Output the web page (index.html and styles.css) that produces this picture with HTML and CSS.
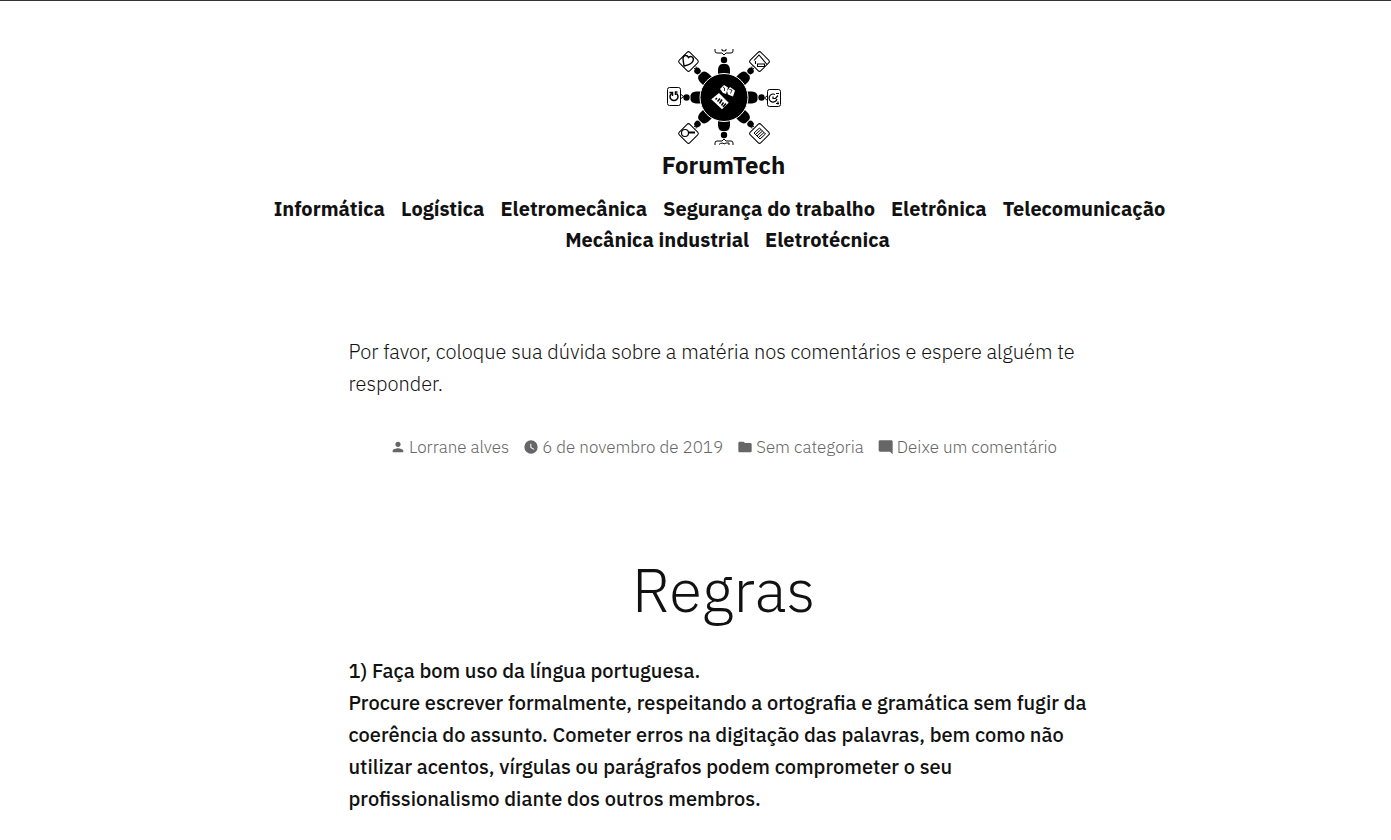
FILE: index.html
```html
<!DOCTYPE html>
<html lang="pt-BR">
<head>
<meta charset="utf-8">
<title>ForumTech</title>
<link rel="stylesheet" href="styles.css">
</head>
<body>
<div class="page">
<header class="site-header">
<a class="logo" href="#" aria-label="ForumTech">
<svg width="116" height="96" viewBox="0 0 116 96" fill="none" stroke="#000" stroke-width="1">
<defs>
<g id="person" fill="#000" stroke="none"><circle cx="0" cy="-37.500" r="3.200"/><path d="M-6-20V-28Q-5.500-33-2-33.500H2Q5.500-33 6-28V-20Z"/></g>
</defs>
<use href="#person" transform="translate(58 48.500)"/>
<use href="#person" transform="translate(58 48.500) rotate(45)"/>
<use href="#person" transform="translate(58 48.500) rotate(90)"/>
<use href="#person" transform="translate(58 48.500) rotate(135)"/>
<use href="#person" transform="translate(58 48.500) rotate(180)"/>
<use href="#person" transform="translate(58 48.500) rotate(225)"/>
<use href="#person" transform="translate(58 48.500) rotate(270)"/>
<use href="#person" transform="translate(58 48.500) rotate(315)"/>
<circle cx="58" cy="48.500" r="24" fill="#000" stroke="#fff"/>
<g fill="#fff" stroke="none"><path d="M53 44l9.700 9.700-6.700 6.600-10.700-10zM54 40l4-4 4 2.500-2 6.500-3-1zM61 42l3-4 5 3.500-2 6-5-2z"/></g>
<path d="M57 38l1.500 1v3M63.500 40.500l2.500.5-1.500 3.500" stroke-width=".8"/>
<path d="M49.500 50.500l1.500-1.500M51.500 52.500l2.500-3M53.500 54.500l2.500-4M55.500 56.500l2-3M57 58l3-3.500" stroke-width="1.500"/>
<path d="M30 17.500l.5 2.500-2.500-.5M86 17.500l-.5 2.500 2.500-.5M14.500 45l3 2.500-3 2.500M101.500 46.500l-3 2.500 3 2.500M30 79.500l.5-2.500-2.500.5M86 79.500l-.5-2.500 2.500.5"/>
<rect x="15" y="5" width="15" height="15" rx="2" transform="rotate(45 22.500 12.500)"/>
<path d="M18 17Q17 10 17 9.500C17 6 21 5.500 22.500 8.500C25 6 28.500 8.500 27 12Q25.500 15.500 18 17z" stroke-width="1.400"/>
<rect x="86" y="5" width="15" height="15" rx="2" transform="rotate(45 93.500 12.500)"/>
<path d="M88 11.500l5-5.500 8 9.500M89.500 12v3M91.500 15h7v2.500h-7z" stroke-width="1.100"/>
<rect x="1.500" y="38.500" width="13" height="18" rx="2"/><path d="M5.500 44.500a4 4 0 1 0 5 0M3.500 43.500h3v3.500M11.500 43h-2v3" stroke-width="1.500"/>
<rect x="101.500" y="40.500" width="13" height="17" rx="2"/><path d="M109 45.500a4 4 0 1 0 2 4.500M107 47.500v2h2.500l2.500-3M110 44.500h3M110 54.500h3M112 52.500v3" stroke-width="1.200"/>
<rect x="15" y="77" width="15" height="15" rx="2" transform="rotate(45 22.500 84.500)"/><circle cx="19" cy="84" r="3.500" stroke-width="1.200"/><path d="M22.500 83.500h6.500" stroke-width="2"/>
<rect x="86" y="77" width="15" height="15" rx="2" transform="rotate(45 93.500 84.500)"/><path d="M88 84l5.500-5 6 6-5.500 5zM89.500 85.500l5.500-5M91 87l5.500-5M92.500 88.500l5.500-5" stroke-width="1"/>
<path d="M49 0v2q0 2 2 2h5l2 2 2-2h5q2 0 2-2V0M56 0v1.500q2 1 4 0V0M49 96v-2q0-2 2-2h5l2-2 2 2h5q2 0 2 2v2M53 95.500q1-1.500 4-1.500l1 1 2-1h3v2"/>
</svg>
</a>
<p class="site-title"><a href="#">ForumTech</a></p>
<nav class="main-nav" aria-label="Menu principal">
<ul>
<li><a href="#">Informática</a></li><li><a href="#">Logística</a></li><li><a href="#">Eletromecânica</a></li><li><a href="#">Segurança do trabalho</a></li><li><a href="#">Eletrônica</a></li><li><a href="#">Telecomunicação</a></li><li><a href="#">Mecânica industrial</a></li><li><a href="#">Eletrotécnica</a></li>
</ul>
</nav>
</header>
<main>
<article class="entry">
<p class="intro">Por favor, coloque sua dúvida sobre a matéria nos comentários e espere alguém te responder.</p>
<footer class="meta">
<a href="#"><svg class="icon" viewBox="0 0 24 24"><path d="M12 12c2.210 0 4-1.790 4-4s-1.790-4-4-4-4 1.790-4 4 1.790 4 4 4zm0 2c-2.670 0-8 1.340-8 4v2h16v-2c0-2.660-5.330-4-8-4z"/></svg>Lorrane alves</a>
<a href="#"><svg class="icon" viewBox="0 0 24 24"><path d="M12 2a10 10 0 1 0 0 20 10 10 0 0 0 0-20zm4.200 14.200L11 13V7h1.500v5.200l4.500 2.700z"/></svg>6 de novembro de 2019</a>
<a href="#"><svg class="icon" viewBox="0 0 24 24"><path d="M10 4H4c-1.100 0-2 .9-2 2v12c0 1.100.9 2 2 2h16c1.100 0 2-.9 2-2V8c0-1.100-.9-2-2-2h-8z"/></svg>Sem categoria</a>
<a href="#"><svg class="icon" viewBox="0 0 24 24"><path d="M22 4c0-1.100-.9-2-2-2H3C2 2 1 3 1 4v13c0 1 1 2 2 2h15l4 4z"/></svg>Deixe um comentário</a>
</footer>
</article>
<article class="entry">
<h1>Regras</h1>
<p class="rules">1) Faça bom uso da língua portuguesa.<br>Procure escrever formalmente, respeitando a ortografia e gramática sem fugir da coerência do assunto. Cometer erros na digitação das palavras, bem como não utilizar acentos, vírgulas ou parágrafos podem comprometer o seu profissionalismo diante dos outros membros.</p>
</article>
</main>
</div>
</body>
</html>
```
FILE: styles.css
```css
* { box-sizing: border-box; }
body {
  margin: 0;
  border-top: 1px solid #333;
  background: #fff;
  color: #111;
  font-family: "IBM Plex Sans", Inter, sans-serif;
  font-size: 20px;
  line-height: 32px;
}
a { color: inherit; text-decoration: none; }
.page { padding: 48px 143px 0 199px; }
.site-header { text-align: center; }
.logo { display: block; height: 96px; }
.logo svg { display: block; margin: 0 auto; }
.site-title { margin: 4px 0 12px; font-size: 24px; font-weight: 700; line-height: 32px; }
.main-nav { padding: 0 56px 0 64px; font-weight: 700; line-height: 31px; }
.main-nav ul { margin: 0; padding: 0; list-style: none; }
.main-nav li { display: inline-block; margin-right: 16px; }
.main-nav li:last-child { margin-right: 0; }
.entry { max-width: 750px; margin: 0 auto; }
.intro { margin: 81px 0 32px; font-weight: 300; }
.meta { display: flex; justify-content: center; gap: 14px; color: #666; font-size: 17px; font-weight: 300; line-height: 30px; white-space: nowrap; }
.meta a { display: flex; align-items: center; gap: 3px; }
.icon { width: 16px; height: 16px; fill: #666; }
h1 { margin: 92px 0 29px; font-size: 60px; font-weight: 300; line-height: 72px; text-align: center; }
.rules { margin: 0; font-weight: 500; }
```
